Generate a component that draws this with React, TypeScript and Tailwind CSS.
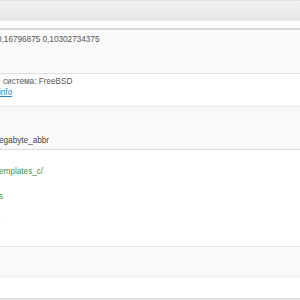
const font = { fontFamily: '"Liberation Sans", Arial, sans-serif' }

export default function App() {
  return (
    <div className="w-[300px] h-[300px] overflow-hidden bg-white text-[8.2px] leading-none text-[#555]" style={font}>
      {/* header bar */}
      <div className="h-[21px] border-t border-[#e2e2e2] bg-gradient-to-b from-[#f2f2f2] to-[#e7e7e7]" />
      <div className="h-[7px] bg-white" />

      {/* load average */}
      <div className="h-[46px] border-t-2 border-b border-t-[#dadada] border-b-[#e0e0e0] bg-[#f9f9f9] pt-[6px]">
        <div className="-ml-[3px] whitespace-nowrap">0,16796875 0,10302734375</div>
      </div>

      {/* os */}
      <div className="h-[31px] bg-gradient-to-b from-[#fbfbfb] to-white to-[20%] pt-[4px] flex flex-col gap-[3px]">
        <div className="pl-[3px] whitespace-nowrap">система: FreeBSD</div>
        <div className="-ml-[1px] whitespace-nowrap text-[#2f7fbf] underline">info</div>
      </div>

      {/* memory */}
      <div className="h-[45px] border-b border-[#dcdcdc] bg-gradient-to-b from-[#f3f3f3] to-[#f9f9f9] to-[15%] flex flex-col justify-end pb-[4px]">
        <div className="-ml-[1px] whitespace-nowrap text-[#444]">egabyte_abbr</div>
      </div>

      {/* paths */}
      <div className="h-[96px] bg-white pt-[18px] flex flex-col gap-[17px] text-[#4a8f3c]">
        <div className="-ml-[1px] whitespace-nowrap">emplates_c/</div>
        <div className="-ml-[1px] whitespace-nowrap">s</div>
        <div className="-ml-[4px] whitespace-nowrap">s</div>
      </div>

      <div className="h-[32px] border-t border-[#e2e2e2] bg-gradient-to-b from-[#f9f9f9] from-[85%] to-[#f1f1f1]" />
      <div className="h-[20px] bg-white" />
      <div className="h-[10px] border-t border-[#dedede] bg-[#ececec]" />
    </div>
  )
}
